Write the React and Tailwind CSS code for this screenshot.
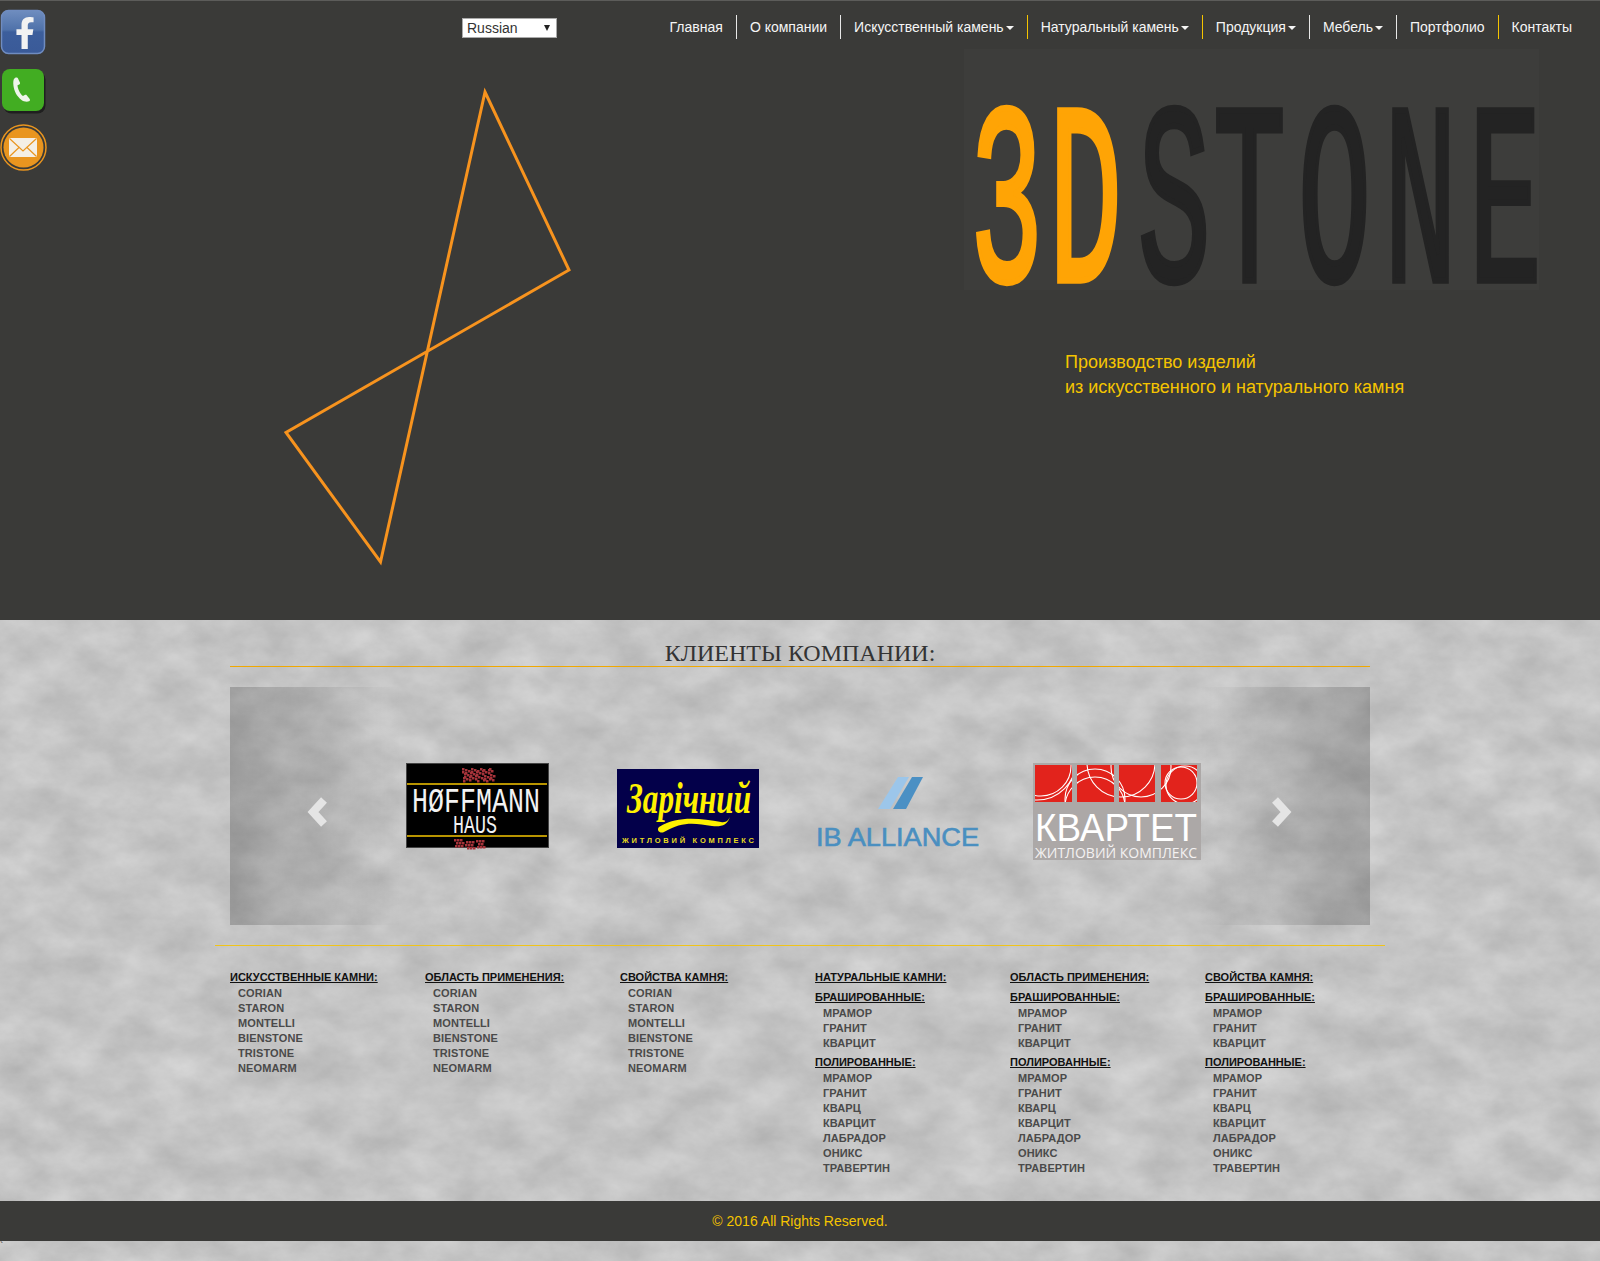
import React from 'react';
import { FaFacebookF } from 'react-icons/fa';

const navItems = [
  { label: 'Главная', sep: 'border-[#e8e8e8]' },
  { label: 'О компании', sep: 'border-[#e8e8e8]' },
  { label: 'Искусственный камень', caret: true, sep: 'border-[#f5c400]' },
  { label: 'Натуральный камень', caret: true, sep: 'border-[#f5c400]' },
  { label: 'Продукция', caret: true, sep: 'border-[#e8e8e8]' },
  { label: 'Мебель', caret: true, sep: 'border-[#e8e8e8]' },
  { label: 'Портфолио', sep: 'border-[#f5c400]' },
  { label: 'Контакты', sep: 'border-transparent' },
];

const brands = ['CORIAN', 'STARON', 'MONTELLI', 'BIENSTONE', 'TRISTONE', 'NEOMARM'];
const brushed = ['МРАМОР', 'ГРАНИТ', 'КВАРЦИТ'];
const polished = ['МРАМОР', 'ГРАНИТ', 'КВАРЦ', 'КВАРЦИТ', 'ЛАБРАДОР', 'ОНИКС', 'ТРАВЕРТИН'];

// red pixel ornament of the Hoffmann logo
const topDots = Array.from({ length: 48 }).map((_, i) => ({ x: 56 + ((i * 13) % 32), y: 5 + ((i * 7) % 13) }));
const bottomDots = Array.from({ length: 26 }).map((_, i) => ({ x: 48 + ((i * 11) % 32), y: 76 + ((i * 5) % 9) }));

const SocialIcons = () => (
  <div className="absolute left-0 top-0 z-20">
    <svg width="48" height="176" viewBox="0 0 48 176">
      <defs>
        <linearGradient id="fbBlue" x1="0" y1="0" x2="0" y2="1">
          <stop offset="0" stopColor="#6f8dbf" />
          <stop offset="0.45" stopColor="#4f72aa" />
          <stop offset="0.5" stopColor="#3c5e9c" />
          <stop offset="1" stopColor="#3a5a98" />
        </linearGradient>
      </defs>
      <rect x="1.500" y="10.500" width="43" height="43" rx="7" fill="url(#fbBlue)" stroke="#6f8cc0" strokeWidth="1.500" />
      <rect x="2" y="70" width="42" height="42" rx="8" fill="#1f1f1f" transform="translate(1.500 1.500)" />
      <rect x="2" y="69" width="42" height="42" rx="8" fill="#42ad22" />
      <path
        d="M15 78c-1.800 1-2 4-1.500 8 .7 5 3 10 8 14 1.600 1.200 5 2.200 7.500 1.300 1-.4 1.200-1.500.7-2.300l-3-3.700c-.5-.6-1.300-.6-2-.2l-1.700 1c-2.800-2-5.300-7-5.500-10.800l1.700-.8c.7-.4 1-1 .8-1.800L18 78.600c-.3-1-1.800-1.300-3-.6z"
        fill="#eef5ea"
      />
      <circle cx="23.500" cy="147.500" r="22.500" fill="#3a3a38" stroke="#e9951f" strokeWidth="1.500" />
      <circle cx="23.500" cy="147.500" r="20" fill="#e9951f" />
      <rect x="9" y="138" width="28" height="19" rx="1" fill="#f4efe6" />
      <path d="M9.500 138.500 23 151l13.500-12.500M9.500 156.500l10-9.500M36.500 156.500l-10-9.500" fill="none" stroke="#e9951f" strokeWidth="1.200" />
    </svg>
    <FaFacebookF className="absolute left-[15px] top-[16px] h-[34px] w-[20px] text-[#f2f2f2]" />
  </div>
);

// wordmark: one real text line, squeezed, with every glyph placed on its own x
const Wordmark = () => (
  <svg width="575" height="241" viewBox="0 0 575 241" className="overflow-visible">
    <text
      transform="scale(0.47 1)"
      y={231.500}
      x="13 181 370 530 711 894 1074"
      fontFamily="'Liberation Mono', monospace"
      fontSize={258}
      strokeWidth={5}
      strokeLinejoin="miter"
      vectorEffect="non-scaling-stroke"
    >
      <tspan fill="#ffa405" stroke="#ffa405" vectorEffect="non-scaling-stroke">3D</tspan>
      <tspan fill="#232323" stroke="#232323" vectorEffect="non-scaling-stroke">STONE</tspan>
    </text>
  </svg>
);

const HoffmannLogo = () => (
  <svg width="143" height="85" viewBox="0 0 143 85" className="mt-[76px] ml-[176px] shrink-0 overflow-visible">
    <rect x="0.500" y="0.500" width="142" height="84" fill="#000" stroke="#444" />
    {topDots.map((d, i) => (
      <rect key={i} x={d.x} y={d.y} width="2.500" height="2.500" fill="#a5333a" />
    ))}
    {bottomDots.map((d, i) => (
      <rect key={i} x={d.x} y={d.y} width="2.500" height="2.500" fill="#a5333a" />
    ))}
    <rect x="1" y="20" width="140" height="2" fill="#b89400" />
    <text x="6" y="49" textLength="128" lengthAdjust="spacingAndGlyphs" fontFamily="'Liberation Mono', monospace" fontSize="35" fill="#f2f2f2">
      HØFFMANN
    </text>
    <text x="47" y="70" textLength="44" lengthAdjust="spacingAndGlyphs" fontFamily="'Liberation Mono', monospace" fontSize="26" fill="#f2f2f2">
      HAUS
    </text>
    <rect x="1" y="72" width="140" height="2" fill="#b89400" />
  </svg>
);

const ZarichnyLogo = () => (
  <svg width="142" height="79" viewBox="0 0 142 79" className="mt-[82px] ml-[68px] shrink-0 overflow-visible">
    <rect width="142" height="79" fill="#03004a" />
    <text x="72" y="44" textAnchor="middle" textLength="124" lengthAdjust="spacingAndGlyphs" fontFamily="'Liberation Serif', serif" fontStyle="italic" fontWeight="700" fontSize="45" fill="#fff200">
      Зарічний
    </text>
    <path d="M42 58c20-12 42-8 62-5 5 1 8-2 9-6-2 10-10 11-18 10-17-3-30-5-48 6-4 2-8-2-5-5z" fill="#fff200" />
    <text x="71" y="74" textAnchor="middle" textLength="132" fontFamily="'Liberation Sans', sans-serif" fontWeight="700" fontSize="7.500" fill="#e8dc20">
      ЖИТЛОВИЙ КОМПЛЕКС
    </text>
  </svg>
);

const AllianceLogo = () => (
  <svg width="164" height="72" viewBox="0 0 164 72" className="mt-[89px] ml-[57px] shrink-0 overflow-visible">
    <polygon points="62,33 74,33 93,1 82,1" fill="#9cc6ea" />
    <polygon points="77,33 90,33 107,1 96,1" fill="#4b90c4" />
    <text x="0" y="70" textLength="163" lengthAdjust="spacingAndGlyphs" fontFamily="'Liberation Sans', sans-serif" fontSize="26" fill="#4a8fc0" stroke="#4a8fc0" strokeWidth="0.600">
      IB ALLIANCE
    </text>
  </svg>
);

const KvartetLogo = () => (
  <svg width="168" height="97" viewBox="0 0 168 97" className="mt-[76px] ml-[53px] shrink-0 overflow-visible">
    <defs>
      <clipPath id="kvartetSquares">
        <rect x="2" y="2" width="37" height="37" />
        <rect x="44" y="2" width="37" height="37" />
        <rect x="86" y="2" width="36" height="37" />
        <rect x="128" y="2" width="36" height="37" />
      </clipPath>
    </defs>
    <rect width="168" height="97" fill="#aca8a7" />
    <rect x="2" y="2" width="37" height="37" fill="#e2231c" />
    <rect x="44" y="2" width="37" height="37" fill="#e2231c" />
    <rect x="86" y="2" width="36" height="37" fill="#e2231c" />
    <rect x="128" y="2" width="36" height="37" fill="#e2231c" />
    <g clipPath="url(#kvartetSquares)" fill="none" stroke="#fff" strokeWidth="1.100">
      <circle cx="8" cy="3" r="30" />
      <circle cx="4" cy="-2" r="39" />
      <circle cx="62" cy="36" r="30" />
      <circle cx="62" cy="44" r="30" />
      <circle cx="108" cy="4" r="30" />
      <circle cx="88" cy="0" r="34" />
      <circle cx="148" cy="20" r="16" />
      <circle cx="152" cy="22" r="19" />
    </g>
    <text x="2" y="78" textLength="162" lengthAdjust="spacingAndGlyphs" fontFamily="'Liberation Sans', sans-serif" fontSize="38" fill="#fff">
      КВАРТЕТ
    </text>
    <text x="2" y="95" textLength="162" lengthAdjust="spacingAndGlyphs" fontFamily="'Open Sans', sans-serif" fontSize="14" fill="#f4f2f2">
      ЖИТЛОВИЙ КОМПЛЕКС
    </text>
  </svg>
);

const ListItems = ({ items }) => (
  <ul className="pl-2">
    {items.map((item) => (
      <li key={item} className="text-[11px] leading-[15px] font-bold tracking-[0.1px] text-[#4a4a4a]">
        {item}
      </li>
    ))}
  </ul>
);

const Heading = ({ className, children }) => (
  <p className={`text-[11px] leading-[15px] font-bold text-[#111] underline ${className || ''}`}>{children}</p>
);

const BrandColumn = ({ title }) => (
  <div className="w-[195px] shrink-0">
    <Heading>{title}</Heading>
    <div className="mt-px">
      <ListItems items={brands} />
    </div>
  </div>
);

const StoneColumn = ({ title }) => (
  <div className="w-[195px] shrink-0">
    <Heading>{title}</Heading>
    <Heading className="mt-[5px]">БРАШИРОВАННЫЕ:</Heading>
    <div className="mt-px">
      <ListItems items={brushed} />
    </div>
    <Heading className="mt-1">ПОЛИРОВАННЫЕ:</Heading>
    <div className="mt-px">
      <ListItems items={polished} />
    </div>
  </div>
);

export default function App() {
  return (
    <div className="relative w-[1600px] overflow-hidden font-['Liberation_Sans',sans-serif]">
      <SocialIcons />

      {/* Dark top part: nav and hero */}
      <div className="relative h-[620px] bg-[#3a3a38]">
        <header className="flex h-[49px] items-start border-t border-[#5c5c5a] pt-[14px] pr-[14px]">
          <div className="relative ml-[462px] mt-[3px]">
            <select className="block h-[20px] w-[95px] appearance-none rounded-none border border-[#aaa] bg-white pl-1 text-[14px] leading-[18px] text-[#333]">
              <option>Russian</option>
            </select>
            <span className="absolute right-[7px] top-[7px] h-0 w-0 border-x-[3px] border-t-[6px] border-x-transparent border-t-[#222]" />
          </div>
          <nav className="ml-auto flex">
            {navItems.map((item) => (
              <a key={item.label} className={`flex h-[24px] items-center border-r px-[13px] text-[14px] text-[#f5f5f5] ${item.sep}`}>
                {item.label}
                {item.caret && <span className="ml-[2px] mt-px h-0 w-0 border-x-[4px] border-t-[4px] border-x-transparent border-t-[#f5f5f5]" />}
              </a>
            ))}
          </nav>
        </header>

        <svg className="absolute left-0 top-0" width="600" height="600" viewBox="0 0 600 600">
          <path d="M485 92 569 270 286 432.500 380.500 562Z" fill="none" stroke="#f7931e" strokeWidth="3" strokeLinejoin="miter" />
        </svg>

        <div className="flex justify-end pr-[61px]">
          <div className="w-[575px]">
            <div className="h-[241px] bg-[#3d3d3b]">
              <Wordmark />
            </div>
            <p className="ml-[101px] mt-[60px] text-[18px] leading-[25px] text-[#f5c400]">
              Производство изделий
              <br />
              из искусственного и натурального камня
            </p>
          </div>
        </div>
      </div>

      {/* Concrete part: clients, link columns, footer */}
      <div className="relative">
        <svg className="absolute inset-0 h-full w-full" aria-hidden="true">
          <filter id="concrete" x="0" y="0" width="100%" height="100%" colorInterpolationFilters="sRGB">
            <feTurbulence type="fractalNoise" baseFrequency="0.02 0.03" numOctaves="6" seed="7" />
            <feColorMatrix values="0.16 0 0 0 0.69  0.16 0 0 0 0.69  0.16 0 0 0 0.69  0 0 0 0 1" />
          </filter>
          <rect width="100%" height="100%" filter="url(#concrete)" />
        </svg>

        <div className="relative">
          <div className="mx-auto w-[1170px]">
            <div className="mx-[15px]">
              <div className="flex h-[47px] items-end justify-center border-b border-[#f0a800]">
                <h2 className="font-['Liberation_Serif',serif] text-[24px] leading-[26px] text-[#333]">КЛИЕНТЫ КОМПАНИИ:</h2>
              </div>

              <div className="relative mt-5 flex h-[238px] items-start">
                <div className="absolute inset-y-0 left-0 flex w-[171px] items-center bg-linear-to-r from-black/20 to-transparent pl-[77px]">
                  <svg width="22" height="30" viewBox="0 0 22 30" className="mt-[12px]">
                    <path d="M17 3 6 15l11 12" fill="none" stroke="#e4e4e4" strokeWidth="8" />
                  </svg>
                </div>
                <HoffmannLogo />
                <ZarichnyLogo />
                <AllianceLogo />
                <KvartetLogo />
                <div className="absolute inset-y-0 right-0 flex w-[171px] items-center justify-end bg-linear-to-l from-black/20 to-transparent pr-[78px]">
                  <svg width="22" height="30" viewBox="0 0 22 30" className="mt-[12px]">
                    <path d="m5 3 11 12L5 27" fill="none" stroke="#e4e4e4" strokeWidth="8" />
                  </svg>
                </div>
              </div>
            </div>

            <div className="mt-5 h-px bg-[#f0c419]" />

            <div className="flex pl-[15px] pt-6 pb-[25px]">
              <BrandColumn title="ИСКУССТВЕННЫЕ КАМНИ:" />
              <BrandColumn title="ОБЛАСТЬ ПРИМЕНЕНИЯ:" />
              <BrandColumn title="СВОЙСТВА КАМНЯ:" />
              <StoneColumn title="НАТУРАЛЬНЫЕ КАМНИ:" />
              <StoneColumn title="ОБЛАСТЬ ПРИМЕНЕНИЯ:" />
              <StoneColumn title="СВОЙСТВА КАМНЯ:" />
            </div>
          </div>

          <footer className="flex h-[40px] items-center justify-center bg-[#3a3a38] text-[14px] text-[#f5c400]">
            © 2016 All Rights Reserved.
          </footer>
          <div className="h-[20px] text-[10px] leading-[12px] text-[#333]">`</div>
        </div>
      </div>
    </div>
  );
}
